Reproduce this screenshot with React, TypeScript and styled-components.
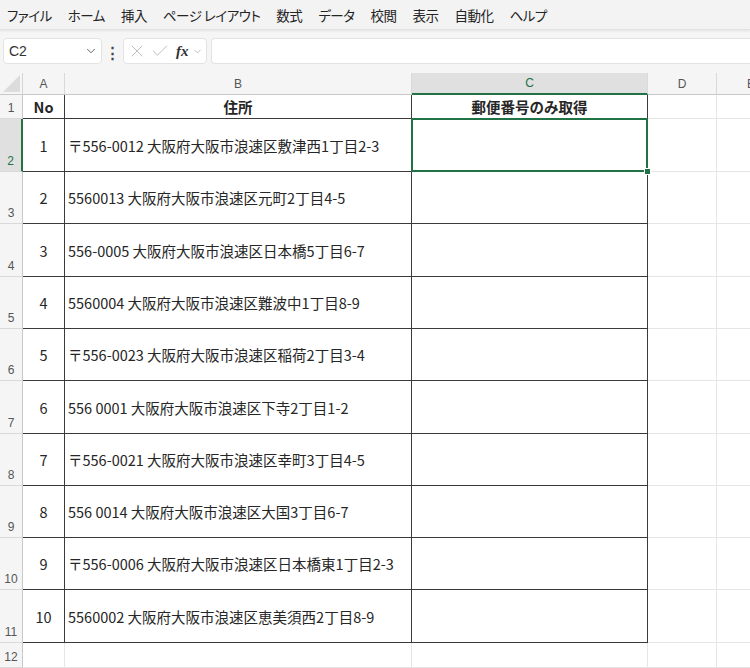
import React from 'react';
import styled, { createGlobalStyle } from 'styled-components';
import { X, Check, ChevronDown } from 'lucide-react';

const GlobalStyle = createGlobalStyle`
	html, body {
		margin: 0;
		padding: 0;
		background: #ffffff;
	}
	body {
		width: 750px;
		height: 668px;
		overflow: hidden;
		font-family: 'Noto Sans CJK JP', 'Noto Sans', sans-serif;
	}
`;

const MENU = ['ファイル', 'ホーム', '挿入', 'ページ レイアウト', '数式', 'データ', '校閲', '表示', '自動化', 'ヘルプ'];

const ROWS = [
	'〒556-0012 大阪府大阪市浪速区敷津西1丁目2-3',
	'5560013 大阪府大阪市浪速区元町2丁目4-5',
	'556-0005 大阪府大阪市浪速区日本橋5丁目6-7',
	'5560004 大阪府大阪市浪速区難波中1丁目8-9',
	'〒556-0023 大阪府大阪市浪速区稲荷2丁目3-4',
	'556 0001 大阪府大阪市浪速区下寺2丁目1-2',
	'〒556-0021 大阪府大阪市浪速区幸町3丁目4-5',
	'556 0014 大阪府大阪市浪速区大国3丁目6-7',
	'〒556-0006 大阪府大阪市浪速区日本橋東1丁目2-3',
	'5560002 大阪府大阪市浪速区恵美須西2丁目8-9',
];

const ROW_HEIGHTS = [24, 53, 52, 53, 52, 52, 53, 52, 52, 52, 53, 25];
const COLS = ['A', 'B', 'C', 'D', 'E'];

const App = () => {
	return (
		<>
			<GlobalStyle />
			<StMenuBar>
				{MENU.map((m) => (
					<StMenuItem key={m}>{m}</StMenuItem>
				))}
			</StMenuBar>
			<StFormulaBar>
				<StNameBox>
					<span>C2</span>
					<ChevronDown size={14} strokeWidth={1.6} color="#555" />
				</StNameBox>
				<StDots>⋮</StDots>
				<StFxBox>
					<X size={20} strokeWidth={1.1} color="#b8b8b8" />
					<Check size={20} strokeWidth={1.1} color="#b8b8b8" />
					<StFx>fx</StFx>
					<ChevronDown size={11} strokeWidth={1.4} color="#999" />
				</StFxBox>
				<StInput />
			</StFormulaBar>
			<StSheet $rows={ROW_HEIGHTS.map((h) => `${h}px`).join(' ')}>
				<StCorner>
					<svg width="17" height="17" viewBox="0 0 17 17">
						<polygon points="17,0 17,17 0,17" fill="#dcdcdc" />
					</svg>
				</StCorner>
				{COLS.map((c) => (
					<StColHead key={c} $selected={c === 'C'}>
						{c}
					</StColHead>
				))}

				{ROW_HEIGHTS.map((_, i) => {
					const row = i + 1;
					const inTable = row <= 11;
					return (
						<React.Fragment key={row}>
							<StRowHead $selected={row === 2}>{row}</StRowHead>
							{row === 1 ? (
								<>
									<StCell $boxed $bold $align="center">No</StCell>
									<StCell $boxed $bold $align="center">住所</StCell>
									<StCell $boxed $bold $align="center">郵便番号のみ取得</StCell>
								</>
							) : inTable ? (
								<>
									<StCell $boxed $align="center">{row - 1}</StCell>
									<StCell $boxed $align="left">{ROWS[row - 2]}</StCell>
									<StCell $boxed $align="left" $active={row === 2} />
								</>
							) : (
								<>
									<StCell />
									<StCell />
									<StCell />
								</>
							)}
							<StCell />
							<StCell />
						</React.Fragment>
					);
				})}
			</StSheet>
		</>
	);
};

export default App;

const StMenuBar = styled.div`
	height: 30px;
	display: flex;
	align-items: center;
	gap: 16px;
	padding-left: 7px;
	background: #f3f3f3;
	border-bottom: 1px solid #e2e2e2;
	box-shadow: 0 1px 2px rgba(0, 0, 0, 0.08);
	box-sizing: border-box;
	position: relative;
	z-index: 1;
`;

const StMenuItem = styled.span`
	font-size: 13.5px;
	color: #242424;
	font-feature-settings: 'palt';
	letter-spacing: -0.5px;
	white-space: pre;
`;

const StFormulaBar = styled.div`
	height: 43px;
	display: flex;
	align-items: flex-start;
	padding: 8px 0 0 3px;
	box-sizing: border-box;
	background: #f5f5f5;
`;

const StNameBox = styled.div`
	width: 99px;
	height: 26px;
	box-sizing: border-box;
	background: #ffffff;
	border: 1px solid #e3e3e3;
	border-radius: 4px;
	display: flex;
	align-items: center;
	justify-content: space-between;
	padding: 0 3px 0 5px;
	font-family: 'Liberation Sans', Arial, sans-serif;
	font-size: 14px;
	color: #333;
`;

const StDots = styled.div`
	width: 21px;
	height: 26px;
	display: flex;
	align-items: center;
	justify-content: center;
	font-size: 15px;
	font-weight: bold;
	color: #444;
`;

const StFxBox = styled.div`
	width: 84px;
	height: 26px;
	box-sizing: border-box;
	background: #ffffff;
	border: 1px solid #e3e3e3;
	border-radius: 4px;
	display: flex;
	align-items: center;
	gap: 3px;
	padding: 0 2px 0 3px;
`;

const StFx = styled.span`
	font-family: 'Liberation Serif', 'Times New Roman', serif;
	font-style: italic;
	font-weight: bold;
	font-size: 15px;
	color: #333;
	margin-left: 3px;
`;

const StInput = styled.div`
	flex: 1;
	height: 26px;
	margin-left: 4px;
	background: #ffffff;
	border: 1px solid #e3e3e3;
	border-right: none;
	border-radius: 4px 0 0 4px;
	box-sizing: border-box;
`;

const StSheet = styled.div<{ $rows: string }>`
	display: grid;
	width: 786px;
	grid-template-columns: 23px 42px 347px 236px 69px 69px;
	grid-template-rows: 22px ${(p) => p.$rows};
	background: #ffffff;
`;

const StCorner = styled.div`
	background: #f5f5f5;
	border-right: 1px solid #d4d4d4;
	border-bottom: 1px solid #c8c8c8;
	box-sizing: border-box;
	display: flex;
	align-items: flex-end;
	justify-content: flex-end;
	padding: 0 2px 2px 0;
`;

const StColHead = styled.div<{ $selected?: boolean }>`
	background: ${(p) => (p.$selected ? '#e0e0e0' : '#f5f5f5')};
	color: ${(p) => (p.$selected ? '#217346' : '#555')};
	border-right: 1px solid #d9d9d9;
	border-bottom: ${(p) => (p.$selected ? '2px solid #217346' : '1px solid #c8c8c8')};
	box-sizing: border-box;
	display: flex;
	align-items: center;
	justify-content: center;
	font-family: 'Liberation Sans', Arial, sans-serif;
	font-size: 12px;
`;

const StRowHead = styled.div<{ $selected?: boolean }>`
	background: ${(p) => (p.$selected ? '#e0e0e0' : '#f5f5f5')};
	color: ${(p) => (p.$selected ? '#217346' : '#555')};
	border-right: ${(p) => (p.$selected ? '2px solid #217346' : '1px solid #c8c8c8')};
	border-bottom: 1px solid #d9d9d9;
	box-sizing: border-box;
	display: flex;
	align-items: flex-end;
	justify-content: center;
	padding-bottom: 3px;
	font-family: 'Liberation Sans', Arial, sans-serif;
	font-size: 12px;
`;

const StCell = styled.div<{ $boxed?: boolean; $bold?: boolean; $align?: 'left' | 'center'; $active?: boolean }>`
	position: relative;
	border-right: 1px solid ${(p) => (p.$boxed ? '#3a3a3a' : '#e6e6e6')};
	border-bottom: 1px solid ${(p) => (p.$boxed ? '#3a3a3a' : '#e6e6e6')};
	box-sizing: border-box;
	display: flex;
	align-items: center;
	justify-content: ${(p) => (p.$align === 'center' ? 'center' : 'flex-start')};
	padding-left: ${(p) => (p.$align === 'left' ? '3px' : '0')};
	font-size: 14.5px;
	font-weight: ${(p) => (p.$bold ? 700 : 400)};
	color: #262626;
	white-space: nowrap;

	${(p) =>
		p.$active &&
		`
		&::after {
			content: '';
			position: absolute;
			left: -1px;
			top: -1px;
			right: -1px;
			bottom: -1px;
			border: 2px solid #217346;
		}
		&::before {
			content: '';
			position: absolute;
			right: -4px;
			bottom: -4px;
			width: 5px;
			height: 5px;
			background: #217346;
			border: 1px solid #ffffff;
			z-index: 2;
		}
	`}
`;
